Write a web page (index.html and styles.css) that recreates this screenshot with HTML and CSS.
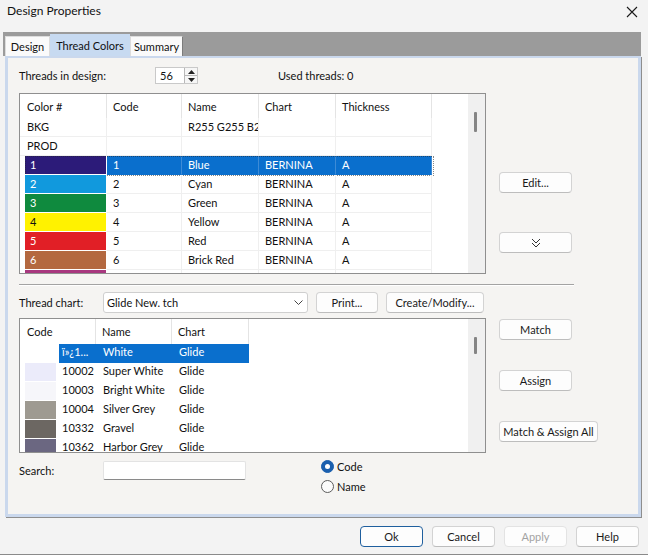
FILE: index.html
```html
<!DOCTYPE html>
<html>
<head>
<meta charset="utf-8">
<link rel="stylesheet" href="styles.css">
</head>
<body>
<div class="window">
  <div class="titlebar">
    <span class="title">Design Properties</span>
    <svg class="close" width="12" height="12" viewBox="0 0 12 12"><path d="M1 1 L11 11 M11 1 L1 11" stroke="#1a1a1a" stroke-width="1.1" fill="none"/></svg>
  </div>
  <div class="tabstrip">
    <div class="tab tab-design">Design</div>
    <div class="tab tab-colors">Thread Colors</div>
    <div class="tab tab-summary">Summary</div>
  </div>
  <div class="panel">
    <div class="threads-row">
      <span class="lbl-threads">Threads in design:</span>
      <div class="spin">
        <span class="spin-val">56</span>
        <div class="spin-btns">
          <span class="spin-b"><svg width="7" height="4" viewBox="0 0 7 4"><path d="M0 4 L3.5 0 L7 4 Z" fill="#222"/></svg></span>
          <span class="spin-b"><svg width="7" height="4" viewBox="0 0 7 4"><path d="M0 0 L3.5 4 L7 0 Z" fill="#222"/></svg></span>
        </div>
      </div>
      <span class="used">Used threads: 0</span>
    </div>

    <div class="section top-section">
      <div class="list list-top">
        <div class="grid">
          <div class="thead t5">
            <div class="th">Color #</div><div class="th">Code</div><div class="th">Name</div><div class="th">Chart</div><div class="th">Thickness</div>
          </div>
          <div class="tr t5"><div class="td first">BKG</div><div class="td"></div><div class="td">R255 G255 B255</div><div class="td"></div><div class="td"></div></div>
          <div class="tr t5"><div class="td first">PROD</div><div class="td"></div><div class="td"></div><div class="td"></div><div class="td"></div></div>
          <div class="tr t5 sel"><div class="td cc"><div class="sw c1">1</div></div><div class="td">1</div><div class="td">Blue</div><div class="td">BERNINA</div><div class="td">A</div></div>
          <div class="tr t5"><div class="td cc"><div class="sw c2">2</div></div><div class="td">2</div><div class="td">Cyan</div><div class="td">BERNINA</div><div class="td">A</div></div>
          <div class="tr t5"><div class="td cc"><div class="sw c3">3</div></div><div class="td">3</div><div class="td">Green</div><div class="td">BERNINA</div><div class="td">A</div></div>
          <div class="tr t5"><div class="td cc"><div class="sw c4">4</div></div><div class="td">4</div><div class="td">Yellow</div><div class="td">BERNINA</div><div class="td">A</div></div>
          <div class="tr t5"><div class="td cc"><div class="sw c5">5</div></div><div class="td">5</div><div class="td">Red</div><div class="td">BERNINA</div><div class="td">A</div></div>
          <div class="tr t5"><div class="td cc"><div class="sw c6">6</div></div><div class="td">6</div><div class="td">Brick Red</div><div class="td">BERNINA</div><div class="td">A</div></div>
          <div class="tr t5 partial"><div class="td cc"><div class="sw c7"></div></div><div class="td"></div><div class="td"></div><div class="td"></div><div class="td"></div></div>
        </div>
        <div class="vscroll"><div class="thumb"></div></div>
      </div>
      <div class="side side-top">
        <button class="btn">Edit...</button>
        <button class="btn"><svg width="10" height="10" viewBox="0 0 10 10"><path d="M1 1 L5 5 L9 1 M1 5 L5 9 L9 5" stroke="#333" stroke-width="1" fill="none"/></svg></button>
      </div>
    </div>

    <div class="sep"></div>

    <div class="chart-row">
      <span class="lbl-chart">Thread chart:</span>
      <div class="combo"><span>Glide New. tch</span><svg width="9" height="5" viewBox="0 0 9 5"><path d="M0.5 0.5 L4.5 4.5 L8.5 0.5" stroke="#444" stroke-width="1" fill="none"/></svg></div>
      <button class="btn btn-print">Print...</button>
      <button class="btn btn-create">Create/Modify...</button>
    </div>

    <div class="section bottom-section">
      <div class="list list-bottom">
        <div class="grid">
          <div class="thead t3">
            <div class="th">Code</div><div class="th">Name</div><div class="th">Chart</div>
          </div>
          <div class="brow sel"><span></span><span class="bsw s1"></span><span></span><span class="bc">ï»¿1...</span><span class="bc bn">White</span><span class="bc bn">Glide</span></div>
          <div class="brow"><span></span><span class="bsw s2"></span><span></span><span class="bc">10002</span><span class="bc bn">Super White</span><span class="bc bn">Glide</span></div>
          <div class="brow"><span></span><span class="bsw s3"></span><span></span><span class="bc">10003</span><span class="bc bn">Bright White</span><span class="bc bn">Glide</span></div>
          <div class="brow"><span></span><span class="bsw s4"></span><span></span><span class="bc">10004</span><span class="bc bn">Silver Grey</span><span class="bc bn">Glide</span></div>
          <div class="brow"><span></span><span class="bsw s5"></span><span></span><span class="bc">10332</span><span class="bc bn">Gravel</span><span class="bc bn">Glide</span></div>
          <div class="brow"><span></span><span class="bsw s6"></span><span></span><span class="bc">10362</span><span class="bc bn">Harbor Grey</span><span class="bc bn">Glide</span></div>
        </div>
        <div class="vscroll"><div class="thumb thumb-b"></div></div>
      </div>
      <div class="side side-bottom">
        <button class="btn">Match</button>
        <button class="btn">Assign</button>
        <button class="btn btn-wide">Match &amp; Assign All</button>
      </div>
    </div>

    <div class="search-row">
      <span class="lbl-search">Search:</span>
      <div class="search-input"></div>
      <div class="radios">
        <div class="radio"><span class="dot on"></span><span>Code</span></div>
        <div class="radio"><span class="dot"></span><span>Name</span></div>
      </div>
    </div>
  </div>

  <div class="footer">
    <button class="fbtn ok">Ok</button>
    <button class="fbtn">Cancel</button>
    <button class="fbtn apply">Apply</button>
    <button class="fbtn">Help</button>
  </div>
</div>
</body>
</html>
```

FILE: styles.css
```css
* { box-sizing: border-box; }
html, body { margin: 0; padding: 0; }
body {
  width: 648px;
  height: 555px;
  overflow: hidden;
  background: #f3f3f3;
  font-family: "Segoe UI", Lato, "Noto Sans", sans-serif;
  font-size: 11px;
  color: #111;
}
.window {
  height: 555px;
  display: flex;
  flex-direction: column;
  border-bottom: 1px solid #8a8a8a;
}
.titlebar {
  height: 32px;
  flex: none;
  display: flex;
  align-items: flex-start;
  padding: 3px 10px 0 7px;
}
.title { line-height: 16px; font-size: 12px; }
.close { margin-left: auto; margin-top: 3px; }

.tabstrip {
  height: 24px;
  flex: none;
  margin: 0 7px 0 3px;
  background: #9b9b9b;
  display: flex;
  align-items: flex-end;
  padding-left: 2px;
}
.tab {
  height: 20px;
  background: #fafafa;
  border: 1px solid #dcdcdc;
  border-bottom: none;
  display: flex;
  align-items: center;
  justify-content: center;
}
.tab-design { width: 45px; }
.tab-colors { width: 80px; height: 22px; background: #c7daf1; border-color: #c7daf1; }
.tab-summary { width: 53px; border-right-color: #7c7c7c; }

.panel {
  flex: none;
  width: 636px;
  height: 461px;
  margin-left: 5px;
  border: 3px solid #cad8ed;
  border-top-width: 2px;
  box-shadow: 1px 1px 0 #8e8e8e;
  background: #f5f4f2;
  padding: 9px 0 0 11px;
  display: flex;
  flex-direction: column;
}

.threads-row { display: flex; align-items: center; height: 17px; }
.lbl-threads { width: 136px; }
.spin {
  width: 43px;
  height: 17px;
  background: #fff;
  border: 1px solid #c9c9c9;
  display: flex;
  align-items: stretch;
}
.spin-val { flex: 1; padding-left: 4px; line-height: 15px; }
.spin-btns {
  width: 13px;
  display: flex;
  flex-direction: column;
  border-left: 1px solid #b8b8b8;
  background: #f6f6f6;
}
.spin-b { flex: 1; display: flex; align-items: center; justify-content: center; }
.spin-b + .spin-b { border-top: 1px solid #b8b8b8; }
.used { margin-left: 80px; }

.section { display: flex; gap: 13px; }
.top-section { margin-top: 9px; }
.bottom-section { margin-top: 5px; }

.list {
  width: 467px;
  border: 1px solid #8f8f8f;
  background: #fff;
  display: flex;
  overflow: hidden;
  flex: none;
}
.list-top { height: 181px; }
.list-bottom { height: 135px; }
.grid { flex: 1; overflow: hidden; }
.vscroll { width: 17px; flex: none; background: #f0f0f0; }
.thumb { width: 3px; height: 20px; margin: 18px 0 0 6px; background: #858585; border-radius: 1px; }
.thumb-b { height: 17px; }

.t5 { display: grid; grid-template-columns: 87px 75px 77px 77px 96px; }
.t3 { display: grid; grid-template-columns: 76px 76px 77px; }
.thead.t5 { height: 24px; }
.thead.t3 { height: 25px; }
.th {
  border-right: 1px solid #e4e4e4;
  padding-left: 6px;
  display: flex;
  align-items: center;
  white-space: nowrap;
}
.th:first-child { padding-left: 7px; }

.tr { height: 19px; position: relative; }
.td {
  border-right: 1px solid #efefef;
  border-bottom: 1px solid #efefef;
  padding-left: 6px;
  line-height: 17px;
  white-space: nowrap;
  overflow: hidden;
}
.td.first { padding-left: 7px; }
.td.cc { padding: 0 0 0 5px; border-bottom: 1px solid #fff; border-right-color: #fff; }
.sw { height: 18px; padding-left: 5px; color: #fff; line-height: 17px; }
.c1 { background: #2c1b79; }
.c2 { background: #1199dd; }
.c3 { background: #0f8a3e; }
.c4 { background: #fff200; color: #111; }
.c5 { background: #e11f26; }
.c6 { background: #b4683f; }
.c7 { background: #a8387f; }
.tr.sel .td:not(.cc) { background: #0a6fcd; color: #fff; border-right-color: #3d8bd6; border-bottom-color: #0a6fcd; }
.tr.sel::after {
  content: "";
  position: absolute;
  left: 5px;
  top: 0;
  width: 407px;
  height: 18px;
  border: 1px dotted rgba(40, 40, 40, 0.55);
  pointer-events: none;
}

.brow {
  display: grid;
  grid-template-columns: 5px 31px 3px 37px 76px 77px;
  height: 19px;
}
.bsw { height: 18px; }
.s1 { background: #ffffff; }
.s2 { background: #ebebfa; }
.s3 { background: #f6f6fa; }
.s4 { background: #9e9a91; }
.s5 { background: #6c6762; }
.s6 { background: #6b6781; }
.bc { padding-left: 3px; line-height: 16px; white-space: nowrap; overflow: hidden; }
.bc.bn { padding-left: 7px; }
.brow.sel .bc { background: #0a6fcd; color: #fff; }

.side { display: flex; flex-direction: column; align-items: flex-start; }
.side-top { padding-top: 79px; gap: 39px; }
.side-bottom { padding-top: 1px; gap: 30px; }

.btn, .fbtn {
  font-family: inherit;
  font-size: 11px;
  color: #1a1a1a;
  height: 21px;
  padding: 0;
  background: #fdfdfd;
  border: 1px solid #d3d3d3;
  border-bottom-color: #bdbdbd;
  border-radius: 4px;
  display: flex;
  align-items: center;
  justify-content: center;
  flex: none;
}
.btn { width: 73px; }
.btn-wide { width: 99px; }
.btn-print { width: 62px; margin-left: 8px; }
.btn-create { width: 98px; margin-left: 8px; }

.sep {
  margin-top: 10px;
  width: 555px;
  height: 2px;
  border-top: 1px solid #a3a3a3;
  border-bottom: 1px solid #ffffff;
  flex: none;
}
.chart-row { margin-top: 6px; display: flex; align-items: center; height: 21px; }
.lbl-chart { width: 84px; }
.combo {
  width: 205px;
  height: 21px;
  background: #fff;
  border: 1px solid #cfcfcf;
  border-radius: 3px;
  display: flex;
  align-items: center;
  justify-content: space-between;
  padding: 0 4px 0 3px;
}

.search-row { margin-top: 3px; display: flex; align-items: flex-start; }
.lbl-search { width: 84px; margin-top: 5px; line-height: 19px; }
.search-input {
  width: 143px;
  height: 19px;
  margin-top: 5px;
  background: #fff;
  border: 1px solid #e3e3e3;
  border-bottom-color: #8a8a8a;
  border-radius: 2px;
}
.radios { margin-left: 75px; display: flex; flex-direction: column; }
.radio { height: 20px; display: flex; align-items: center; gap: 3px; }
.dot {
  width: 13px;
  height: 13px;
  border-radius: 50%;
  border: 1px solid #5c5c5c;
  background: #fbfbfb;
  display: flex;
  align-items: center;
  justify-content: center;
}
.dot.on { background: #1a5fae; border-color: #1a5fae; }
.dot.on::before { content: ""; width: 5px; height: 5px; border-radius: 50%; background: #fff; }

.footer {
  margin-top: 9px;
  display: flex;
  justify-content: flex-end;
  gap: 9px;
  padding-right: 9px;
}
.fbtn { width: 63px; }
.fbtn.ok { border-color: #1f5f9e; }
.fbtn.apply { color: #a3a3a3; border-color: #e3e3e3; }
```
